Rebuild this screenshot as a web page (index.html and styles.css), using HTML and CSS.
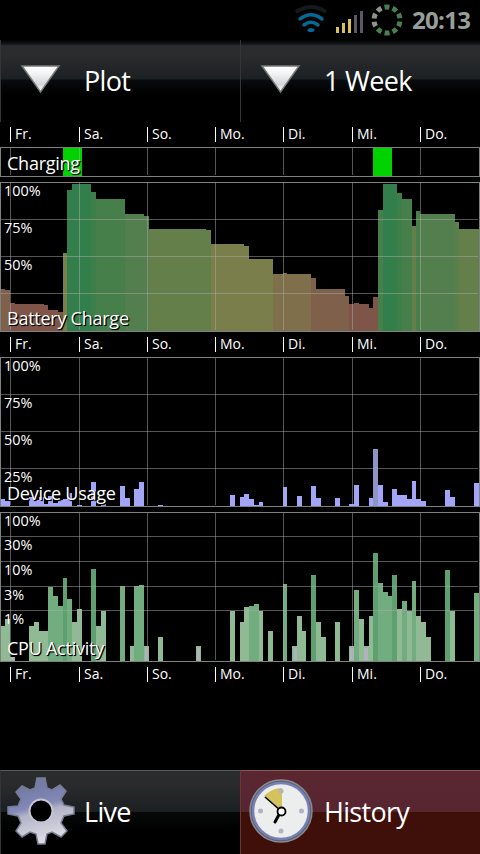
FILE: index.html
```html
<!DOCTYPE html>
<html lang="de">
<head>
    <meta charset="UTF-8">
    <meta name="viewport" content="width=device-width, initial-scale=1.0">
    <title>Battery History</title>
    <link rel="stylesheet" href="styles.css">
</head>
<body>
    <div class="status-bar">
        <svg class="wifi" width="34" height="32" viewBox="294 4 34 32">
            <path class="wifi-off" d="M296 12Q311 2 326 12"/>
            <path class="wifi-on" d="M300 19Q311 10.500 322 19M304 25Q311 19.500 318 25"/>
            <path class="wifi-dot" d="M307 30Q311 26 315 30L313 32H309Z"/>
        </svg>
        <svg class="signal" width="28" height="24" viewBox="336 10 28 24">
            <path class="signal-on" d="M336 27h3v6h-3zM342 23h3v10h-3zM348 19h3v14h-3z"/>
            <path class="signal-off" d="M354 15h3v18h-3zM360 11h3v22h-3z"/>
        </svg>
        <svg class="ring" width="32" height="32" viewBox="-16 -16 32 32">
            <circle class="ring-on" r="13" pathLength="100"/>
            <circle class="ring-off" r="13" pathLength="100"/>
        </svg>
        <span class="time">20:13</span>
    </div>

    <div class="toolbar">
        <div class="tab">
            <svg class="arrow" width="44" height="34" viewBox="0 0 44 34">
                <defs>
                    <linearGradient id="arrowFill" x1="0" y1="0" x2="0" y2="1">
                        <stop offset="0" stop-color="#fff"/>
                        <stop offset="0.250" stop-color="#f6f6f6"/>
                        <stop offset="0.700" stop-color="#d4d6d8"/>
                        <stop offset="1" stop-color="#fff"/>
                    </linearGradient>
                </defs>
                <path d="M3 4H40L21.500 30Z"/>
            </svg>
            <span>Plot</span>
        </div>
        <div class="tab">
            <svg class="arrow" width="44" height="34" viewBox="0 0 44 34">
                <path d="M3 4H40L21.500 30Z"/>
            </svg>
            <span>1 Week</span>
        </div>
    </div>

    <div class="axis">
        <span>Fr.</span><span>Sa.</span><span>So.</span><span>Mo.</span><span>Di.</span><span>Mi.</span><span>Do.</span>
    </div>

    <svg class="chart" width="480" height="30" viewBox="0 147 480 30">
        <path class="charging" d="M63 148h19v28h-19zM373 148h19v28h-19z"/>
        <path class="grid" d="M10.500 148v27M79.500 148v27M147.500 148v27M215.500 148v27M283.500 148v27M352.500 148v27M420.500 148v27"/>
        <rect class="frame" x="0.500" y="147.500" width="479" height="29"/>
        <text class="name" x="7" y="170">Charging</text>
    </svg>

    <svg class="chart gap" width="480" height="150" viewBox="0 182 480 150">
        <!-- charge level, red to green -->
        <path fill="#7f604a" d="M1 331V289H5V290H10V331zM311 331V278H316V289H345V296H349V331z"/>
        <path fill="#7f5549" d="M10 331V303H15V304H44V305H48V310H58V312H63V331zM349 331V304H354V303H359V304H369V308H373V297H378V331z"/>
        <path fill="#7f704b" d="M273 331V274H283V273H287V274H311V331z"/>
        <path fill="#7a7e4a" d="M63 331V253H67V331zM211 331V244H244V246H249V259H273V331z"/>
        <path fill="#657f4b" d="M149 331V229H206V230H211V331zM412 331V226H416V331zM459 331V229H479V331z"/>
        <path fill="#5b7f4b" d="M455 331V222H459V331z"/>
        <path fill="#527f4d" d="M125 331V214H144V216H149V331zM420 331V214H455V331z"/>
        <path fill="#477f4b" d="M96 331V199H125V331zM378 331V210H383V331zM402 331V199H412V331zM416 331V211H420V331z"/>
        <path fill="#3c7f4b" d="M91 331V192H96V331zM397 331V193H402V331z"/>
        <path fill="#337f4b" d="M67 331V190H72V184H91V331zM383 331V184H397V331z"/>
        <path class="grid" d="M1 219.500H478M1 256.500H478M1 293.500H478"/>
        <path class="grid" d="M10.500 183v147M79.500 183v147M147.500 183v147M215.500 183v147M283.500 183v147M352.500 183v147M420.500 183v147"/>
        <rect class="frame" x="0.500" y="182.500" width="479" height="149"/>
        <text class="tick" x="4" y="196">100%</text>
        <text class="tick" x="4" y="233">75%</text>
        <text class="tick" x="4" y="270">50%</text>
        <text class="name" x="7" y="325">Battery Charge</text>
    </svg>

    <div class="axis">
        <span>Fr.</span><span>Sa.</span><span>So.</span><span>Mo.</span><span>Di.</span><span>Mi.</span><span>Do.</span>
    </div>

    <svg class="chart" width="480" height="150" viewBox="0 357 480 150">
        <path class="usage" d="M1 506V499H5V501H10V506zM29 506V497H34V500H39V497H44V504H48V496H53V503H58V500H63V499H67V493H72V506zM77 506V505H82V506zM91 506V482H96V506zM101 506V504H106V506zM120 506V486H125V498H130V506zM134 506V489H139V482H144V506zM158 506V505H163V506z"/>
        <path class="usage" d="M230 506V495H235V506zM240 506V497H244V494H249V499H254V505H259V502H263V506zM283 506V487H287V506zM297 506V496H302V506zM311 506V486H316V498H321V506zM335 506V498H340V506zM349 506V504H354V485H359V506z"/>
        <path class="usage" d="M369 506V498H373V506zM378 506V485H383V502H388V506zM392 506V489H397V495H407V499H412V481H416V499H421V501H426V506zM445 506V490H450V497H455V506zM474 506V483H479V506z"/>
        <path class="usage-high" d="M373 506V449H378V506z"/>
        <path class="grid" d="M1 394.500H478M1 431.500H478M1 468.500H478"/>
        <path class="grid" d="M10.500 358v147M79.500 358v147M147.500 358v147M215.500 358v147M283.500 358v147M352.500 358v147M420.500 358v147"/>
        <rect class="frame" x="0.500" y="357.500" width="479" height="149"/>
        <text class="tick" x="4" y="371">100%</text>
        <text class="tick" x="4" y="408">75%</text>
        <text class="tick" x="4" y="445">50%</text>
        <text class="tick" x="4" y="482">25%</text>
        <text class="name" x="7" y="500">Device Usage</text>
    </svg>

    <svg class="chart gap" width="480" height="150" viewBox="0 512 480 150">
        <!-- logarithmic scale, busier hours get a deeper green -->
        <path class="cpu-low" d="M1 661V626H5V619H10V657H15V661zM29 661V626H34V622H39V631H48V661zM72 661V622H77V609H82V661zM96 661V626H101V611H106V661zM130 661V646H134V661zM144 661V646H149V661zM158 661V637H163V661zM196 661V646H201V661z"/>
        <path class="cpu-low" d="M230 661V611H235V661zM240 661V622H244V607H249V661zM259 661V611H263V661zM268 661V631H273V661zM292 661V646H297V616H302V631H306V661zM316 661V622H321V637H326V661zM335 661V622H340V661zM349 661V646H354V661z"/>
        <path class="cpu-low" d="M359 661V619H364V646H369V616H373V661zM397 661V609H402V661zM407 661V611H412V661zM416 661V616H421V622H426V637H431V661zM450 661V611H455V661z"/>
        <path class="cpu-mid" d="M48 661V587H53V596H58V606H63V661zM67 661V599H72V661zM120 661V586H125V661zM134 661V586H139V585H144V661zM249 661V606H254V604H259V661zM283 661V584H287V661zM354 661V590H359V661zM378 661V583H383V592H388V596H392V661zM402 661V601H407V661zM412 661V581H416V661zM474 661V593H479V661z"/>
        <path class="cpu-high" d="M63 661V578H67V661zM91 661V569H96V661zM311 661V575H316V661zM373 661V553H378V661zM392 661V575H397V661zM445 661V570H450V661z"/>
        <path class="cpu-idle" d="M10 657h4v3h-4zM145 648h3v12h-3zM197 648h3v12h-3zM294 648h3v12h-3zM350 648h4v12h-4zM364 648h4v12h-4z"/>
        <path class="grid" d="M1 536.500H478M1 561.500H478M1 586.500H478M1 610.500H478"/>
        <path class="grid" d="M10.500 513v147M79.500 513v147M147.500 513v147M215.500 513v147M283.500 513v147M352.500 513v147M420.500 513v147"/>
        <rect class="frame" x="0.500" y="512.500" width="479" height="149"/>
        <text class="tick" x="4" y="526">100%</text>
        <text class="tick" x="4" y="550">30%</text>
        <text class="tick" x="4" y="575">10%</text>
        <text class="tick" x="4" y="600">3%</text>
        <text class="tick" x="4" y="624">1%</text>
        <text class="name" x="7" y="655">CPU Activity</text>
    </svg>

    <div class="axis">
        <span>Fr.</span><span>Sa.</span><span>So.</span><span>Mo.</span><span>Di.</span><span>Mi.</span><span>Do.</span>
    </div>

    <div class="bottom-nav">
        <div class="tab">
            <svg class="gear" width="70" height="70" viewBox="-35 -35 70 70">
                <defs>
                    <linearGradient id="gearFill" x1="0.350" y1="0" x2="0.600" y2="1">
                        <stop offset="0.150" stop-color="#747ca6"/>
                        <stop offset="0.420" stop-color="#8489b8"/>
                        <stop offset="0.520" stop-color="#b3b3c6"/>
                        <stop offset="1" stop-color="#e2e3e8"/>
                    </linearGradient>
                </defs>
                <path d="M-4 -33H4L6 -23L11 -21L19 -26L25 -20L20 -12L23 -6L33 -4V3L23 5L20 12L26 20L20 26L11 21L6 23L4 33H-3L-5 23L-11 21L-19 26L-25 20L-20 12L-23 5L-33 3V-4L-23 -5L-20 -12L-25 -19L-19 -25L-11 -21L-6 -23Z"/>
                <circle r="11.500"/>
            </svg>
            <span>Live</span>
        </div>
        <div class="tab active">
            <svg class="clock" width="66" height="66" viewBox="-33 -33 66 66">
                <circle class="rim-outer" r="31"/>
                <circle class="rim-inner" r="28"/>
                <circle class="face" r="26"/>
                <path class="wedge" d="M1 0V-23Q-9 -23 -17 -15Z"/>
                <path class="dots" d="M-2.500 -20a2.500 2.500 0 1 0 5 0a2.500 2.500 0 1 0 -5 0M-2.500 20a2.500 2.500 0 1 0 5 0a2.500 2.500 0 1 0 -5 0M-23 0a2.500 2.500 0 1 0 5 0a2.500 2.500 0 1 0 -5 0M18 0a2.500 2.500 0 1 0 5 0a2.500 2.500 0 1 0 -5 0"/>
                <path class="minute" d="M0 0L-16 -14"/>
                <path class="hour" d="M0 0L-6 11"/>
                <circle class="hub" cx="0.500" cy="0.500" r="4"/>
            </svg>
            <span>History</span>
        </div>
    </div>
</body>
</html>
```

FILE: styles.css
```css
body {
    font-family: "Open Sans", "Noto Sans", sans-serif;
    background-color: #000;
    color: #fff;
    margin: 0;
    width: 480px;
    height: 854px;
    display: flex;
    flex-direction: column;
    overflow: hidden;
}
svg {
    display: block;
    flex: none;
}
.status-bar {
    display: flex;
    align-items: center;
    justify-content: flex-end;
    height: 39px;
    padding: 0 9px 1px 0;
}
.wifi {
    margin-right: 8px;
}
.wifi path {
    fill: none;
}
.wifi .wifi-off {
    stroke: #14191b;
    stroke-width: 4;
}
.wifi .wifi-on {
    stroke: #046a95;
    stroke-width: 3.5;
    stroke-linecap: round;
}
.wifi .wifi-dot {
    fill: #046a95;
}
.signal {
    margin: 5px 7px 0 0;
}
.signal-on {
    fill: #d6c057;
}
.signal-off {
    fill: #5c5865;
}
.ring {
    margin-right: 9px;
}
.ring circle {
    fill: none;
    stroke-width: 5;
    transform: rotate(-101deg);
}
.ring .ring-on {
    stroke: #477f4f;
    stroke-dasharray: 6 4 6 4 6 4 6 4 6 4 6 4 6 34;
}
.ring .ring-off {
    stroke: #8d938d;
    stroke-dasharray: 0 70 6 4 6 4 6 4;
}
.time {
    color: #989f98;
    width: 59px;
    font-size: 24px;
    font-weight: bold;
    letter-spacing: -0.7px;
    line-height: 38px;
}
.toolbar,
.bottom-nav {
    display: flex;
}
.toolbar {
    height: 82px;
}
.tab {
    display: flex;
    align-items: center;
    box-sizing: border-box;
    width: 240px;
    font-size: 27px;
    letter-spacing: -0.7px;
    border-left: 1px solid #343536;
}
.tab span {
    margin-top: -2px;
}
.toolbar .tab {
    background: linear-gradient(#000 0, #141718 4px, #2b2c2e 6px, #2a2b2d 16px, #1b2022 39px, #090c0d 40px, #000 55px);
    padding-left: 18px;
}
.arrow {
    margin: -4px 21px 0 0;
}
.arrow path {
    fill: url(#arrowFill);
    stroke: #77797b;
    stroke-width: 1.5;
}
.axis {
    display: grid;
    grid-template-columns: 69px 68px 68px 68px 69px 68px 60px;
    height: 15px;
    padding: 5px 0 5px 10px;
}
.axis span {
    border-left: 1px solid #fff;
    padding-left: 4px;
    font-size: 14px;
    line-height: 14px;
}
.gap {
    margin-top: 5px;
}
.chart text {
    fill: #fff;
}
.chart .tick {
    font-size: 14.4px;
}
.chart .name {
    font-size: 18px;
    letter-spacing: -0.25px;
    text-shadow: 1px 1px 1px #000, 1px 1px 0 #000;
}
.grid {
    fill: none;
    stroke: rgba(170, 170, 170, 0.5);
}
.frame {
    fill: none;
    stroke: #7d827e;
}
.charging {
    fill: #00d200;
}
.usage {
    fill: #a3a5f8;
}
.usage-high {
    fill: #8e94c6;
}
.cpu-low {
    fill: #8fba93;
}
.cpu-mid {
    fill: #72ad80;
}
.cpu-high {
    fill: #5fa070;
}
.cpu-idle {
    fill: #b0b3bd;
}
.bottom-nav {
    height: 84px;
    margin-top: auto;
}
.bottom-nav .tab {
    background: linear-gradient(#2b2c2e 0, #2a2b2d 12px, #1b2022 41px, #070909 41px, #000 58px);
    border-top: 1px solid #57595b;
    padding-left: 5px;
}
.bottom-nav .active {
    background: linear-gradient(#5a2731 0, #572530 41px, #3f0f09 41px, #3f0f09 100%);
    border-color: #6c3538;
    border-top-color: #8a5a50;
    padding-left: 7px;
}
.gear {
    margin: -4px 8px 0 0;
}
.gear path {
    fill: url(#gearFill);
    stroke: #777b94;
    stroke-width: 1.5;
}
.gear circle {
    fill: #000;
    stroke: #c5c6d4;
    stroke-width: 2;
}
.clock {
    margin: -4px 10px 0 0;
}
.rim-outer {
    fill: #5f616c;
    stroke: #878996;
    stroke-width: 1.5;
}
.rim-inner {
    fill: #e9eaec;
    stroke: #7780b4;
    stroke-width: 2.5;
}
.face {
    fill: #eceded;
}
.wedge {
    fill: #d4c25d;
}
.dots {
    fill: #b1b3c0;
}
.minute,
.hour {
    stroke: #000;
    stroke-width: 1.6;
}
.hour {
    stroke-width: 3;
    stroke-linecap: round;
}
.hub {
    fill: #fff;
    stroke: #000;
    stroke-width: 1.8;
}
```
